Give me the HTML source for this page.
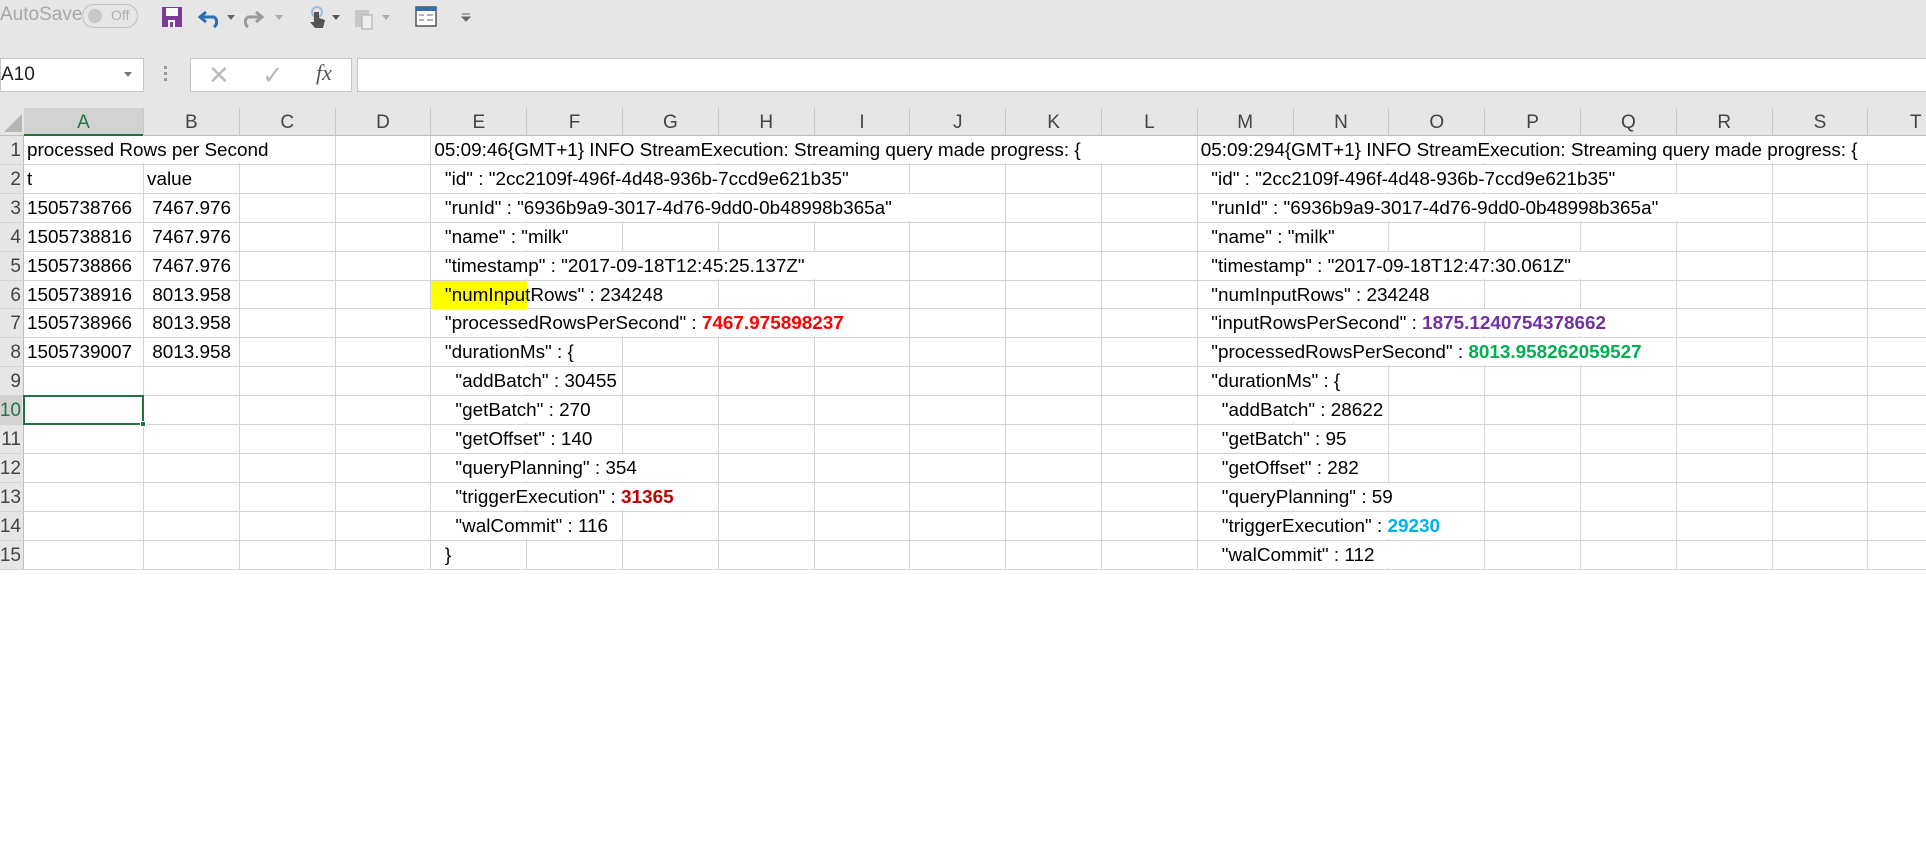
<!DOCTYPE html>
<html><head><meta charset="utf-8">
<style>
*{margin:0;padding:0;box-sizing:border-box}
body{width:1926px;height:864px;background:#fff;position:relative;overflow:hidden;font-family:"Liberation Sans",sans-serif}
.top{position:absolute;left:0;top:0;width:1926px;height:108px;background:#e6e6e6}
.abs{position:absolute}
.t{position:absolute;white-space:pre;font-size:18.9px;color:#000;background:#fff;height:27px;line-height:29px;padding-left:3px;overflow:visible}
.hd{position:absolute;background:#e6e6e6;color:#444;font-size:19px;text-align:center}
</style></head><body>
<div class="top"></div>
<div class="abs" style="left:0;top:4px;font-size:19px;color:#a8a8a8">AutoSave</div>
<div class="abs" style="left:82px;top:4px;width:56px;height:24px;border:1.5px solid #c0c0c0;border-radius:12px;font-size:14px;color:#b0b0b0;line-height:21px;padding-left:28px">Off</div>
<div class="abs" style="left:88px;top:9px;width:14px;height:14px;border-radius:7px;background:#c8c8c8"></div>
<svg class="abs" style="left:160px;top:4px" width="320" height="26" viewBox="0 0 320 26">
<rect x="2" y="3" width="20" height="20" fill="#7d3c98"/><rect x="6" y="4" width="12" height="8" fill="#fff"/><rect x="8" y="16" width="7" height="7" fill="#fff"/><rect x="10" y="18" width="3" height="5" fill="#7d3c98"/>
<path d="M46 8 L40 13 L46 18 M40 13 H54 A6 6 0 0 1 54 23" stroke="#2e6eb5" stroke-width="3" fill="none"/>
<path d="M67 11 l4 5 l4 -5z" fill="#666"/>
<path d="M96 8 L102 13 L96 18 M102 13 H88 A6 6 0 0 0 88 23" stroke="#9a9a9a" stroke-width="3" fill="none"/>
<path d="M115 11 l4 5 l4 -5z" fill="#aaa"/>
<circle cx="157" cy="8" r="5" fill="none" stroke="#9bbbe0" stroke-width="2"/><path d="M154 8 v10 h-4 l5 6 h8 l2 -8 l-6 -2 v-6z" fill="#555"/>
<path d="M172 11 l4 5 l4 -5z" fill="#555"/>
<rect x="195" y="6" width="14" height="17" fill="#c8c8c8"/><rect x="202" y="11" width="10" height="14" fill="#eee" stroke="#aaa"/>
<path d="M222 11 l4 5 l4 -5z" fill="#aaa"/>
<rect x="256" y="3" width="20" height="19" fill="#fff" stroke="#555" stroke-width="1.5"/><rect x="256" y="3" width="20" height="4" fill="#2e6eb5"/><path d="M259 11h5M267 11h6M259 16h5M267 16h6" stroke="#666"/>
<path d="M302 10h8M302 13l4 4 4-4z" stroke="#666" fill="#666"/>
</svg>
<div class="abs" style="left:0;top:58px;width:144px;height:34px;background:#fff;border:1px solid #c6c6c6;font-size:19px;line-height:32px;color:#222">A10</div>
<div class="abs" style="left:124px;top:72px;border:4px solid transparent;border-top:5px solid #777"></div>
<div class="abs" style="left:164px;top:66px;width:3px;height:3px;background:#999;box-shadow:0 6px #999,0 12px #999"></div>
<div class="abs" style="left:190px;top:58px;width:162px;height:34px;background:#fff;border:1px solid #c6c6c6"></div>
<div class="abs" style="left:208px;top:60px;font-size:26px;color:#bbb">✕</div>
<div class="abs" style="left:262px;top:60px;font-size:26px;color:#bbb">✓</div>
<div class="abs" style="left:316px;top:60px;font-size:22px;color:#555;font-style:italic;font-family:'Liberation Serif',serif">fx</div>
<div class="abs" style="left:357px;top:58px;width:1570px;height:34px;background:#fff;border:1px solid #c6c6c6"></div>
<div id="g"></div>
<script>
var g=document.getElementById('g'),H='';
var X=[24,144];for(var k=1;k<=19;k++)X.push(144+95.8*k);
var top0=136,RH=28.9;
function R(i){return top0+RH*i}
H+='<div class="abs" style="left:0;top:108px;width:1926px;height:28px;background:#e6e6e6;border-bottom:1px solid #bdbdbd"></div>';
H+='<div class="abs" style="left:0;top:136px;width:24px;height:'+(RH*15)+'px;background:#e6e6e6;border-right:1px solid #bdbdbd"></div>';
H+='<svg class="abs" style="left:4px;top:114px" width="18" height="18"><path d="M18 0V18H0z" fill="#b5b5b5"/></svg>';
H+='<div class="abs" style="left:24px;top:108px;width:120px;height:28px;background:#d2d2d2;border-bottom:2px solid #217346"></div>';
var L='ABCDEFGHIJKLMNOPQRST';
for(var c=0;c<20;c++){var x0=X[c],x1=X[c+1]||1990;
H+='<div class="hd" style="left:'+x0+'px;top:108px;width:'+(x1-x0)+'px;height:28px;line-height:29px;border-right:1px solid #c8c8c8;background:transparent;'+(c==0?'color:#217346':'')+'">'+L[c]+'</div>';}
for(var r=0;r<15;r++){
H+='<div class="abs" style="left:-8px;top:'+R(r)+'px;width:30px;height:'+RH+'px;line-height:30px;font-size:19px;color:'+(r==9?'#217346':'#444')+';'+(r==9?'background:#d2d2d2;':'')+'text-align:right;padding-right:1px">'+(r+1)+'</div>';
H+='<div class="abs" style="left:0;top:'+(R(r+1)-1)+'px;width:1926px;height:1px;background:#d4d4d4"></div>';}
for(var c=1;c<X.length;c++)H+='<div class="abs" style="left:'+(X[c]-1)+'px;top:136px;width:1px;height:'+(RH*15)+'px;background:#d4d4d4"></div>';
function T(r,x0,x1,txt){H+='<div class="t" style="left:'+x0+'px;top:'+R(r-1)+'px;width:'+(x1-x0-1)+'px">'+txt+'</div>';}
var A=X[0],B=X[1],C=X[2],D=X[3],E=X[4],F=X[5],G=X[6],Hh=X[7],I=X[8],J=X[9],K=X[10],Lc=X[11],M=X[12],N=X[13],O=X[14],P=X[15],Q=X[16],Rr=X[17],S=X[18],Tt=X[19];
T(1,A,D,'processed Rows per Second');
T(2,A,B,'t');T(2,B,C,'value');
var d=[[1505738766,'7467.976'],[1505738816,'7467.976'],[1505738866,'7467.976'],[1505738916,'8013.958'],[1505738966,'8013.958'],[1505739007,'8013.958']];
for(var i=0;i<6;i++){T(i+3,A,B,d[i][0]);T(i+3,B,C,' '+d[i][1]);}
function red(s,c){return '<b style="color:'+c+'">'+s+'</b>'}
T(1,E,M,'05:09:46{GMT+1} INFO StreamExecution: Streaming query made progress: {');
T(2,E,J,'  "id" : "2cc2109f-496f-4d48-936b-7ccd9e621b35"');
T(3,E,K,'  "runId" : "6936b9a9-3017-4d76-9dd0-0b48998b365a"');
T(4,E,G,'  "name" : "milk"');
T(5,E,J,'  "timestamp" : "2017-09-18T12:45:25.137Z"');
H+='<div class="abs" style="left:'+E+'px;top:'+R(5)+'px;width:'+(F-E)+'px;height:28px;background:#ffff00"></div>';
H+='<div class="abs" style="left:'+F+'px;top:'+R(5)+'px;width:'+(Hh-F-1)+'px;height:27px;background:#fff"></div>';
H+='<div class="t" style="left:'+E+'px;top:'+R(5)+'px;background:transparent">  "numInputRows" : 234248</div>';
T(7,E,J,'  "processedRowsPerSecond" : '+red('7467.975898237','#ff0000'));
T(8,E,G,'  "durationMs" : {');
T(9,E,G,'    "addBatch" : 30455');
T(10,E,G,'    "getBatch" : 270');
T(11,E,G,'    "getOffset" : 140');
T(12,E,Hh,'    "queryPlanning" : 354');
T(13,E,Hh,'    "triggerExecution" : '+red('31365','#c00000'));
T(14,E,G,'    "walCommit" : 116');
T(15,E,F,'  }');
T(1,M,2000,'05:09:294{GMT+1} INFO StreamExecution: Streaming query made progress: {');
T(2,M,Rr,'  "id" : "2cc2109f-496f-4d48-936b-7ccd9e621b35"');
T(3,M,S,'  "runId" : "6936b9a9-3017-4d76-9dd0-0b48998b365a"');
T(4,M,O,'  "name" : "milk"');
T(5,M,Rr,'  "timestamp" : "2017-09-18T12:47:30.061Z"');
T(6,M,P,'  "numInputRows" : 234248');
T(7,M,Rr,'  "inputRowsPerSecond" : '+red('1875.1240754378662','#7030a0'));
T(8,M,Rr,'  "processedRowsPerSecond" : '+red('8013.958262059527','#00b050'));
T(9,M,O,'  "durationMs" : {');
T(10,M,O,'    "addBatch" : 28622');
T(11,M,O,'    "getBatch" : 95');
T(12,M,O,'    "getOffset" : 282');
T(13,M,P,'    "queryPlanning" : 59');
T(14,M,P,'    "triggerExecution" : '+red('29230','#00b0f0'));
T(15,M,P,'    "walCommit" : 112');
H+='<div class="abs" style="left:'+(A-1)+'px;top:'+(R(9)-1)+'px;width:'+(B-A+1)+'px;height:'+(RH+1)+'px;border:2px solid #217346"></div>';
H+='<div class="abs" style="left:'+(B-4)+'px;top:'+(R(10)-4)+'px;width:6px;height:6px;background:#217346;border:1px solid #fff"></div>';
g.innerHTML=H;
</script>
</body></html>
